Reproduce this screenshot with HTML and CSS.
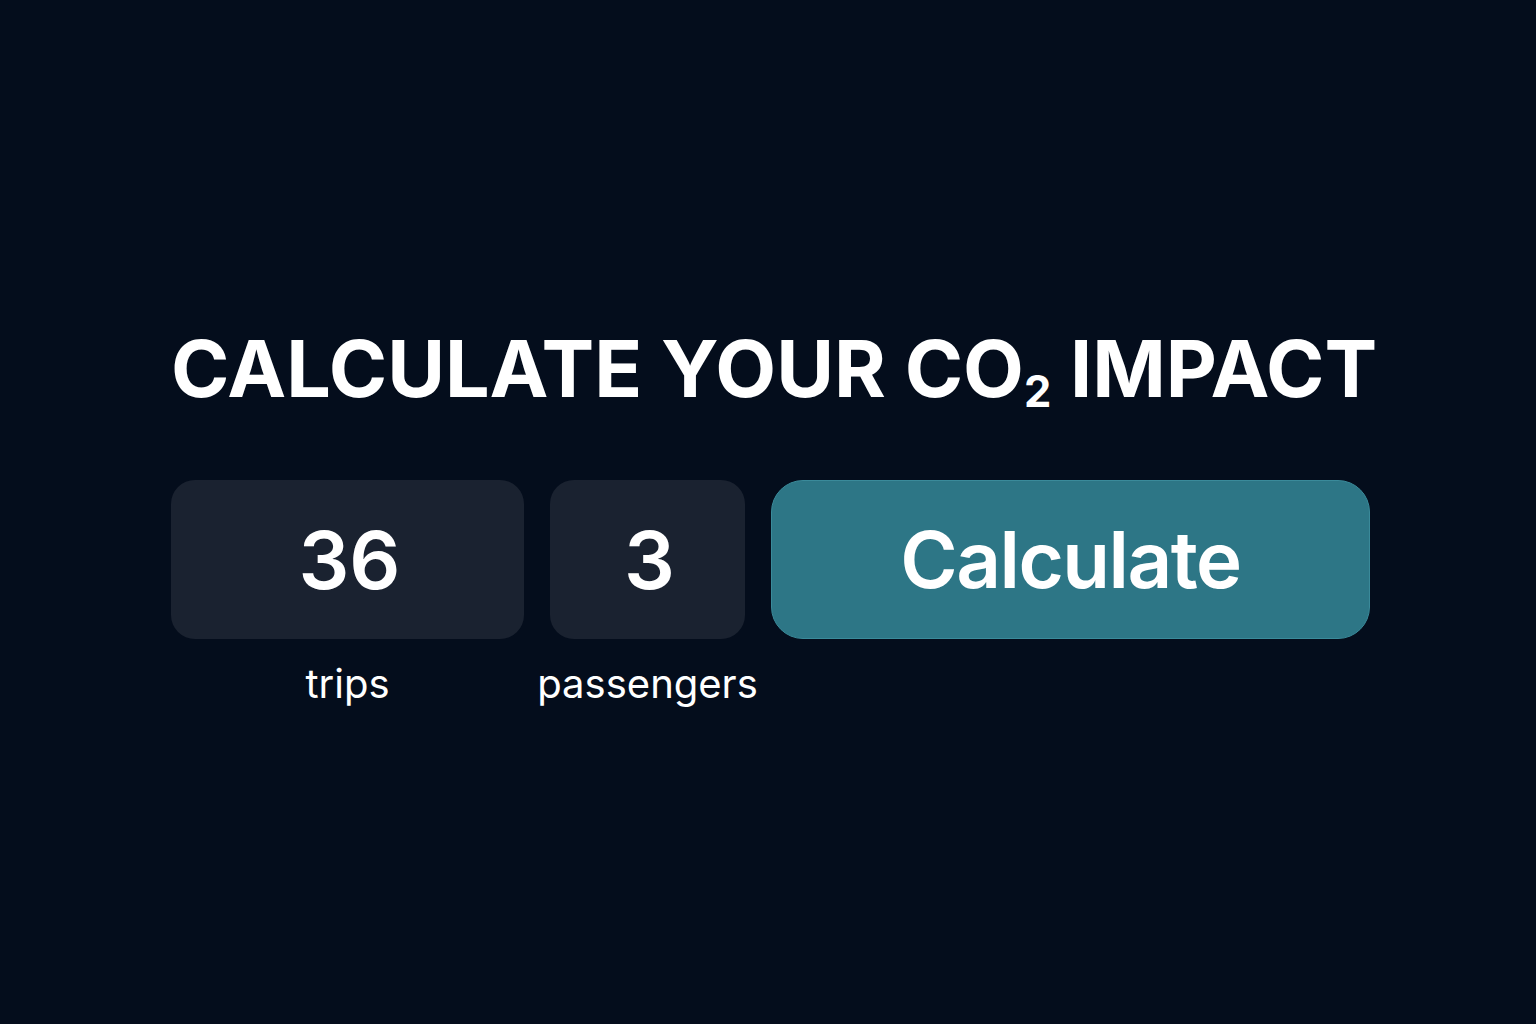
FILE: index.html
```html
<!DOCTYPE html>
<html>
<head>
<meta charset="utf-8">
<link rel="stylesheet" href="styles.css">
</head>
<body>
<main class="page">
  <h1 class="title">CALCULATE YOUR CO<sub class="sub">2</sub> IMPACT</h1>
  <div class="form">
    <div class="field field-trips">
      <div class="box">36</div>
      <div class="label">trips</div>
    </div>
    <div class="field field-pass">
      <div class="box">3</div>
      <div class="label">passengers</div>
    </div>
    <div class="field field-btn">
      <button class="btn">Calculate</button>
    </div>
  </div>
</main>
</body>
</html>
```
FILE: styles.css
```css
html, body {
  margin: 0;
  padding: 0;
  background: #040d1c;
  height: 100%;
}
body {
  font-family: Inter, "Noto Sans", sans-serif;
  color: #ffffff;
}
.page {
  width: 1200px;
  margin: 0 auto;
  padding-top: 320px;
  box-sizing: border-box;
}
.title {
  margin: 0;
  padding-left: 3px;
  font-size: 79px;
  font-weight: 700;
  line-height: 96px;
  letter-spacing: 0;
  text-align: center;
  white-space: nowrap;
}
.sub {
  font-size: 0.55em;
  vertical-align: -0.22em;
  line-height: 0;
}
.form {
  display: grid;
  grid-template-columns: 353px 195px 599px;
  column-gap: 26px;
  margin-top: 64px;
  padding-left: 3px;
}
.field {
  display: flex;
  flex-direction: column;
  align-items: center;
}
.box {
  width: 100%;
  height: 159px;
  border-radius: 24px;
  background: #1a2230;
  display: flex;
  align-items: center;
  justify-content: center;
  font-size: 80px;
  font-weight: 600;
  padding-left: 4px;
  box-sizing: border-box;
}
.label {
  margin-top: 18px;
  font-size: 40px;
  line-height: 54px;
  font-weight: 400;
  white-space: nowrap;
}
.btn {
  width: 100%;
  height: 159px;
  border: 1px solid #3a8a9a;
  border-radius: 32px;
  background: #2d7686;
  color: #ffffff;
  font-family: Inter, "Noto Sans", sans-serif;
  font-size: 78px;
  font-weight: 600;
  letter-spacing: -1.5px;
  padding: 0;
  cursor: pointer;
}
```
